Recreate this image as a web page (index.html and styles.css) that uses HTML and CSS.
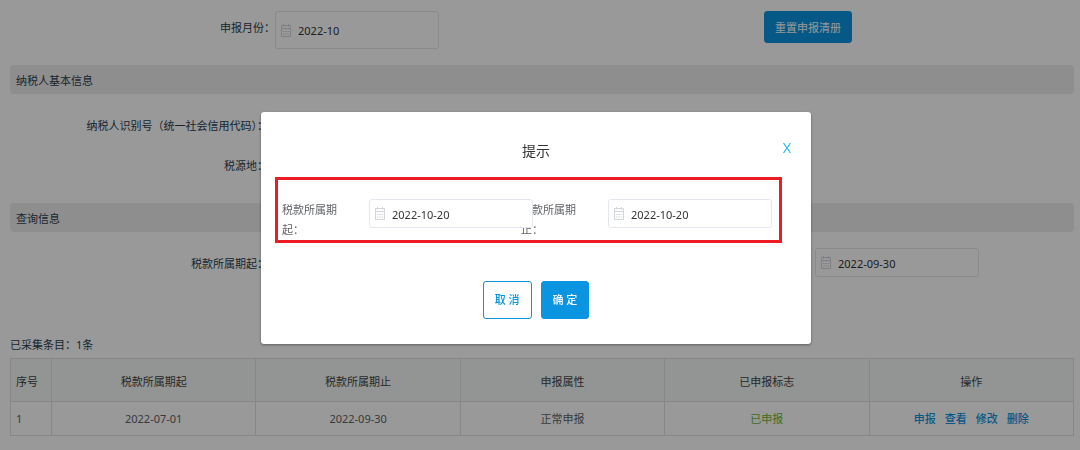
FILE: index.html
```html
<!DOCTYPE html>
<html lang="zh-CN">
<head>
  <meta charset="UTF-8">
  <meta name="viewport" content="width=device-width, initial-scale=1.0">
  <title>申报清册</title>
  <link rel="stylesheet" href="styles.css">
</head>
<body>
  <svg class="symbols" aria-hidden="true">
    <symbol id="calendar" viewBox="0 0 10 13">
      <path d="M.5 1.500h9v11h-9zM.5 4.500h9M2.500 0v2.500M7.500 0v2.500" fill="none" stroke="currentColor"/>
      <path d="M2 7.500h1.500M4.300 7.500h1.500M6.600 7.500h1.500M2 10h1.500M4.300 10h1.500M6.600 10h1.500" stroke="currentColor"/>
    </symbol>
  </svg>

  <main class="page">
    <!-- Month -->
    <div class="form-row month-row">
      <label for="month">申报月份：</label>
      <div class="date-box date-box-tall">
        <svg class="icon"><use href="#calendar"/></svg>
        <input type="text" id="month" value="2022-10">
      </div>
      <button type="button" class="btn btn-primary btn-reset">重置申报清册</button>
    </div>

    <!-- Taxpayer -->
    <h2 class="section-title">纳税人基本信息</h2>
    <dl class="info">
      <dt>纳税人识别号（统一社会信用代码）：</dt>
      <dt>税源地：</dt>
    </dl>

    <!-- Query -->
    <h2 class="section-title">查询信息</h2>
    <div class="form-row query-row">
      <label for="query_start">税款所属期起：</label>
      <div class="date-box">
        <svg class="icon"><use href="#calendar"/></svg>
        <input type="text" id="query_start">
      </div>
      <div class="date-box">
        <svg class="icon"><use href="#calendar"/></svg>
        <input type="text" id="query_end" aria-label="税款所属期止" value="2022-09-30">
      </div>
    </div>

    <!-- Records -->
    <p class="count">已采集条目：1条</p>
    <table class="records">
      <thead>
        <tr>
          <th class="col-index">序号</th>
          <th>税款所属期起</th>
          <th>税款所属期止</th>
          <th>申报属性</th>
          <th>已申报标志</th>
          <th>操作</th>
        </tr>
      </thead>
      <tbody>
        <tr>
          <td class="col-index">1</td>
          <td>2022-07-01</td>
          <td>2022-09-30</td>
          <td>正常申报</td>
          <td class="done">已申报</td>
          <td>
            <div class="actions">
              <a href="#">申报</a>
              <a href="#">查看</a>
              <a href="#">修改</a>
              <a href="#">删除</a>
            </div>
          </td>
        </tr>
      </tbody>
    </table>
  </main>

  <!-- Dialog -->
  <div class="overlay">
    <div class="dialog" role="dialog" aria-labelledby="dialog_title">
      <div class="dialog-header">
        <h3 id="dialog_title">提示</h3>
        <button type="button" class="close" aria-label="关闭">
          <svg viewBox="0 0 10 12"><path d="M1.500 1l7 10M8.500 1l-7 10" fill="none" stroke="currentColor" stroke-width="1.200"/></svg>
        </button>
      </div>
      <div class="period">
        <div class="period-item">
          <label for="start_date">税款所属期起：</label>
          <div class="date-box">
            <svg class="icon"><use href="#calendar"/></svg>
            <input type="text" id="start_date" value="2022-10-20">
          </div>
        </div>
        <div class="period-item">
          <label for="end_date">税款所属期止：</label>
          <div class="date-box">
            <svg class="icon"><use href="#calendar"/></svg>
            <input type="text" id="end_date" value="2022-10-20">
          </div>
        </div>
      </div>
      <div class="dialog-footer">
        <button type="button" class="btn">取 消</button>
        <button type="button" class="btn btn-primary">确 定</button>
      </div>
    </div>
  </div>
</body>
</html>
```

FILE: styles.css
```css
* {
  box-sizing: border-box;
}
body {
  margin: 0;
  font-family: "Noto Sans", "Noto Sans CJK SC", sans-serif;
  font-size: 11px;
  line-height: 20px;
  color: #2c3e50;
  background: #fff;
}
input, button {
  font: inherit;
}
.symbols {
  display: none;
}
.page {
  padding: 11px 6px 15px 10px;
}

/* form rows */
.form-row {
  display: grid;
  align-items: start;
}
.form-row label {
  text-align: right;
}
.month-row {
  grid-template-columns: 265px 1fr 310px;
  min-height: 54px;
}
.month-row label {
  padding-top: 7px;
}
.query-row {
  grid-template-columns: 258px 1fr 259px;
  padding-top: 16px;
}
.query-row label {
  padding-top: 6px;
}
.date-box {
  display: flex;
  align-items: center;
  width: 164px;
  height: 29px;
  padding: 0 5px;
  gap: 7px;
  border: 1px solid #e4e7ed;
  border-radius: 3px;
  background: #fff;
}
.date-box-tall {
  height: 38px;
}
.date-box input {
  flex: 1;
  min-width: 0;
  padding: 2px 0 0;
  border: none;
  outline: none;
  background: none;
  color: #333;
}
.icon {
  flex: none;
  width: 10px;
  height: 13px;
  color: #d3d6db;
}

/* sections */
.section-title {
  margin: 0;
  padding: 6px 6px 3px;
  border-radius: 4px;
  background: #ededed;
  font-size: 11px;
  font-weight: 400;
}
.info {
  margin: 0;
  padding: 22px 0 27px;
  display: grid;
  gap: 20px;
}
.info dt {
  width: 258px;
  text-align: right;
  white-space: nowrap;
}

/* table */
.count {
  margin: 58px 0 3px;
}
.records {
  width: 100%;
  border-collapse: collapse;
  table-layout: fixed;
}
.records th, .records td {
  height: 34px;
  padding: 0 5px;
  border: 1px solid #dfe1e0;
  text-align: center;
  font-weight: 400;
  color: #606266;
}
.records th {
  height: 43px;
  padding-top: 3px;
  background: #f3f8f5;
  color: #444;
}
.records .col-index {
  width: 41px;
  text-align: left;
}
.records .done {
  color: #67b832;
}
.actions {
  display: flex;
  justify-content: center;
  gap: 9px;
}
.actions a {
  color: #0b94df;
  font-weight: 500;
  text-decoration: none;
}

/* buttons */
.btn {
  height: 38px;
  padding: 0 11px;
  border: 1px solid #0b94df;
  border-radius: 3px;
  background: #fff;
  color: #0b94df;
  font-weight: 500;
  cursor: pointer;
}
.btn-primary {
  background: #0b94df;
  color: #fff;
}
.btn-reset {
  justify-self: start;
  height: 32px;
  padding: 2px 10px 0;
  font-weight: 400;
}

/* dialog */
.overlay {
  position: fixed;
  inset: 0;
  display: flex;
  justify-content: center;
  align-items: flex-start;
  padding: 112px 8px 0 0;
  background: rgba(0, 0, 0, 0.4);
}
.dialog {
  width: 100%;
  max-width: 550px;
  padding: 0 29px 25px 14px;
  border-radius: 3px;
  background: #fff;
  box-shadow: 0 1px 3px rgba(0, 0, 0, 0.4);
}
.dialog-header {
  display: grid;
  grid-template-columns: 1fr auto 1fr;
  align-items: center;
  height: 65px;
  padding: 12px 0 0 15px;
}
.dialog-header h3 {
  grid-column: 2;
  margin: 0;
  font-size: 14px;
  font-weight: 400;
  color: #333;
}
.close {
  justify-self: end;
  display: flex;
  width: 10px;
  height: 12px;
  margin: 0 -10px 6px 0;
  padding: 0;
  border: none;
  background: none;
  color: #1fb9ee;
  cursor: pointer;
}
.period {
  display: flex;
  padding: 19px 19px 0 4px;
  border: 3px solid #ed1c24;
}
.period-item {
  display: flex;
  flex: 1;
  min-width: 0;
}
.period-item label {
  flex: none;
  width: 87px;
  padding: 1px 30px 0 0;
  color: #606266;
}
/* the box is wider than its column and lies over the next label */
.period-item .date-box {
  flex: none;
  position: relative;
  z-index: 1;
}
.dialog-footer {
  display: flex;
  justify-content: center;
  gap: 9px;
  padding: 38px 0 0 15px;
}
```
